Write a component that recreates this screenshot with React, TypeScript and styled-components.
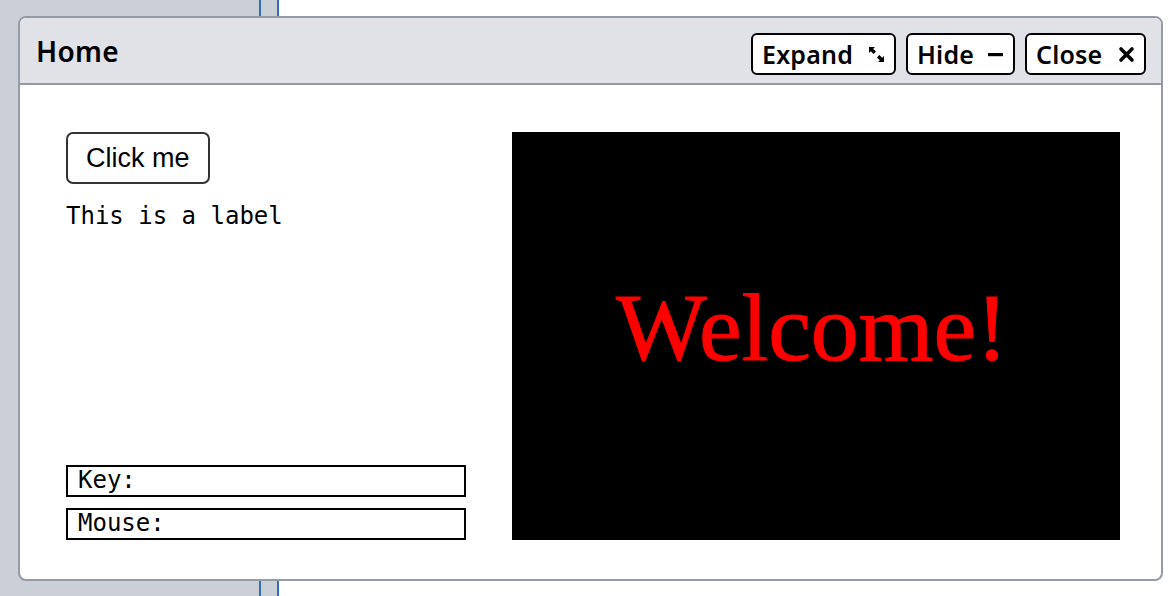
import React from "react";
import styled, { createGlobalStyle } from "styled-components";

const Global = createGlobalStyle`
  html, body { margin: 0; padding: 0; background: #ffffff; }
  body { font-family: "Noto Sans", sans-serif; overflow: hidden; }
`;

const Desktop = styled.div`
  position: relative;
  display: flex;
  width: 1170px;
  height: 596px;
  background: #ffffff;
`;

const Panel = styled.div<{ $w: number }>`
  width: ${(p) => p.$w}px;
  flex: none;
  background: #cbd0d8;
`;

const Rule = styled.div`
  width: 2px;
  flex: none;
  background: #2f6db5;
`;

const Window = styled.section`
  position: absolute;
  left: 18px;
  top: 16px;
  width: 1141px;
  display: flex;
  flex-direction: column;
  border: 2px solid #959ba4;
  border-radius: 8px;
  background: #ffffff;
  overflow: hidden;
`;

const Header = styled.header`
  height: 67px;
  box-sizing: border-box;
  display: flex;
  align-items: center;
  justify-content: space-between;
  padding: 7px 15px 0 16px;
  background: #e1e2e7;
  border-bottom: 2px solid #959ba4;
`;

const Title = styled.h1`
  margin: 0 0 6px;
  font-family: "Noto Sans", sans-serif;
  font-weight: 600;
  font-size: 28px;
  color: #000;
  letter-spacing: 0.3px;
`;

const Actions = styled.div`
  display: flex;
  gap: 10px;
`;

const WinButton = styled.button<{ $w: number }>`
  width: ${(p) => p.$w}px;
  height: 42px;
  box-sizing: border-box;
  display: flex;
  align-items: center;
  justify-content: space-between;
  padding: 0 9px 0 9px;
  border: 2px solid #000;
  border-radius: 6px;
  background: #ffffff;
  font-family: "Noto Sans", sans-serif;
  font-weight: 600;
  font-size: 25px;
  letter-spacing: 0.2px;
  color: #000;
`;

const Body = styled.div`
  display: flex;
  gap: 46px;
  padding: 47px 41px 39px 46px;
`;

const LeftCol = styled.div`
  width: 400px;
  display: flex;
  flex-direction: column;
  align-items: flex-start;
`;

const ClickButton = styled.button`
  height: 52px;
  box-sizing: border-box;
  padding: 0 18px;
  border: 2px solid #333;
  border-radius: 7px;
  background: #fff;
  font-family: "Liberation Sans", Arial, sans-serif;
  font-size: 27px;
  color: #000;
`;

const Label = styled.div`
  margin-top: 18px;
  font-family: "DejaVu Sans Mono", monospace;
  font-size: 24px;
  line-height: 28px;
  color: #000;
`;

const Fields = styled.div`
  margin-top: auto;
  align-self: stretch;
  display: flex;
  flex-direction: column;
  gap: 11px;
`;

const Field = styled.div`
  height: 32px;
  box-sizing: border-box;
  border: 2px solid #000;
  padding: 0 10px;
  font-family: "DejaVu Sans Mono", monospace;
  font-size: 24px;
  line-height: 27px;
  color: #000;
`;

const Screen = styled.div`
  width: 608px;
  height: 408px;
  flex: none;
  background: #000;
  display: flex;
  align-items: center;
  justify-content: center;
`;

const Welcome = styled.span`
  font-family: "Liberation Serif", "Times New Roman", serif;
  font-size: 96px;
  line-height: 1;
  color: #ff0000;
  -webkit-text-stroke: 1px #ff0000;
  margin: 0 8px 16px 0;
`;

const ExpandIcon = () => (
  <svg width="17" height="17" viewBox="0 0 17 17">
    <path d="M1 1 L7 1 L5.2 2.8 L8 5.6 L5.6 8 L2.8 5.2 L1 7 Z" fill="#000" />
    <path d="M16 16 L10 16 L11.8 14.2 L9 11.4 L11.4 9 L14.2 11.8 L16 10 Z" fill="#000" />
  </svg>
);

const MinusIcon = () => (
  <svg width="17" height="17" viewBox="0 0 17 17">
    <rect x="1" y="7" width="15" height="3.2" fill="#000" />
  </svg>
);

const CloseIcon = () => (
  <svg width="17" height="17" viewBox="0 0 17 17">
    <path d="M3 3 L14 14 M14 3 L3 14" stroke="#000" strokeWidth="3.6" strokeLinecap="round" />
  </svg>
);

export default function App() {
  return (
    <>
      <Global />
      <Desktop>
        <Panel $w={259} />
        <Rule />
        <Panel $w={16} />
        <Rule />
        <Window>
          <Header>
            <Title>Home</Title>
            <Actions>
              <WinButton $w={145}>
                Expand <ExpandIcon />
              </WinButton>
              <WinButton $w={109}>
                Hide <MinusIcon />
              </WinButton>
              <WinButton $w={121}>
                Close <CloseIcon />
              </WinButton>
            </Actions>
          </Header>
          <Body>
            <LeftCol>
              <ClickButton>Click me</ClickButton>
              <Label>This is a label</Label>
              <Fields>
                <Field>Key:</Field>
                <Field>Mouse:</Field>
              </Fields>
            </LeftCol>
            <Screen>
              <Welcome>Welcome!</Welcome>
            </Screen>
          </Body>
        </Window>
      </Desktop>
    </>
  );
}
